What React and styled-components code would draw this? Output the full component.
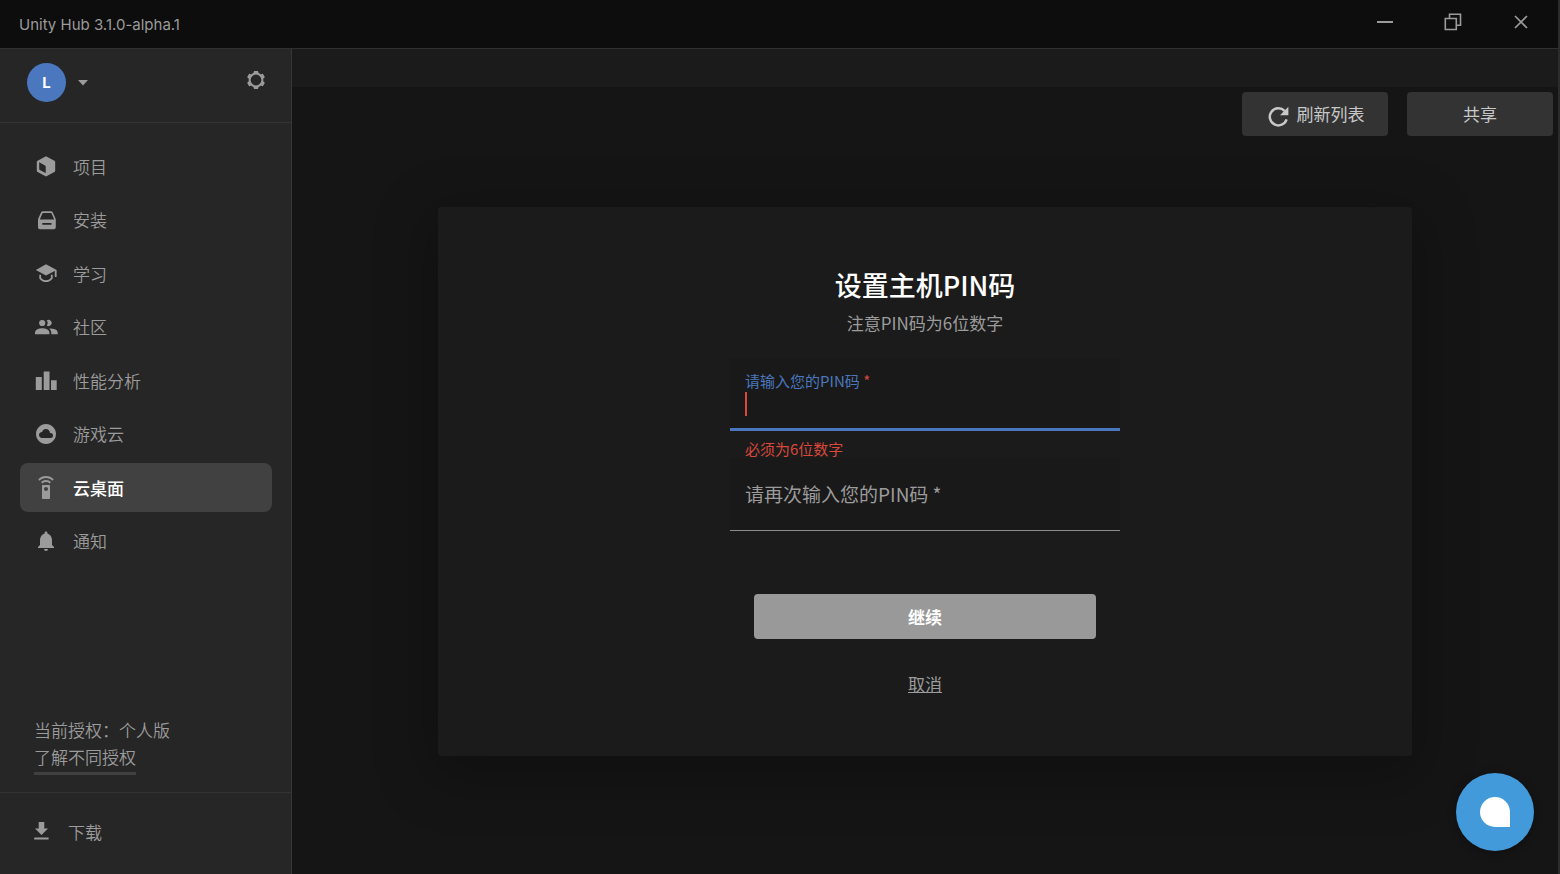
import React, { useState } from 'react';
import styled, { createGlobalStyle, css } from 'styled-components';
import { MdCloudCircle, MdNotifications, MdSettingsRemote } from 'react-icons/md';

const GlobalStyle = createGlobalStyle`
  * {
    box-sizing: border-box;
  }

  body {
    margin: 0;
    background: #151515;
    color: #9b9b9b;
    font-family: 'Noto Sans CJK SC', sans-serif;
    font-size: 17px;
    line-height: 24px;
  }

  button,
  input {
    padding: 0;
    border: 0;
    background: none;
    color: inherit;
    font: inherit;
  }

  button {
    cursor: pointer;
  }

  ul,
  h1,
  p {
    margin: 0;
    padding: 0;
    list-style: none;
  }
`;

const Window = styled.div`
  display: flex;
  flex-direction: column;
  min-height: 100vh;
  border-right: 2px solid #2c2c2e;
`;

const TitleBar = styled.header`
  display: flex;
  justify-content: space-between;
  height: 49px;
  padding: 0 3px 0 19px;
  border-bottom: 1px solid #303030;
  background: #0d0d0d;
  font-family: Inter, sans-serif;
  font-size: 15px;
  line-height: 49px;
`;

const WindowControls = styled.div`
  display: flex;
  height: 43px;
`;

const WindowButton = styled.button`
  display: grid;
  place-items: center;
  width: 68px;
`;

const Body = styled.div`
  display: flex;
  flex: 1;
`;

const Sidebar = styled.aside`
  display: flex;
  flex-direction: column;
  flex: 0 0 292px;
  border-right: 1px solid #363636;
  background: #262626;
  font-weight: 350;
`;

const Account = styled.div`
  display: flex;
  align-items: flex-start;
  justify-content: space-between;
  height: 74px;
  padding: 14px 25px 0 27px;
  border-bottom: 1px solid #333;
`;

const AccountButton = styled.button`
  display: flex;
  align-items: center;
  gap: 12px;
`;

const Avatar = styled.span`
  display: grid;
  place-items: center;
  width: 39px;
  height: 39px;
  border-radius: 50%;
  background: #4a77bd;
  color: #fff;
  font-family: Inter, sans-serif;
  font-size: 15px;
  font-weight: 700;
`;

const IconButton = styled.button`
  display: grid;
  place-items: center;
  width: 20px;
  height: 34px;
`;

const Menu = styled.ul`
  display: flex;
  flex-direction: column;
  justify-content: space-between;
  min-height: 424px;
  margin: 19px 19px auto 20px;
`;

const MenuItem = styled.a`
  display: flex;
  align-items: center;
  gap: 15px;
  height: 49px;
  padding: 0 14px;
  border-radius: 8px;
  color: #9b9b9b;
  text-decoration: none;

  ${({ $active }) =>
    $active &&
    css`
      background: #414141;

      span {
        color: #fff;
        font-weight: 500;
      }
    `}
`;

const License = styled.div`
  padding: 0 34px 17px;
  line-height: 27px;
`;

const LicenseLink = styled.a`
  display: inline-block;
  padding-bottom: 2px;
  border-bottom: 3px solid #404040;
  color: inherit;
  text-decoration: none;
`;

const Downloads = styled.button`
  display: flex;
  align-items: center;
  gap: 19px;
  height: 82px;
  padding: 0 34px 4px;
  border-top: 1px solid #333;
`;

const Main = styled.main`
  display: flex;
  flex-direction: column;
  flex: 1;
  min-width: 0;
`;

const MainHeader = styled.div`
  height: 38px;
  background: #1b1b1b;
`;

const Toolbar = styled.div`
  display: flex;
  justify-content: flex-end;
  gap: 19px;
  padding: 5px 5px 0;
`;

const ToolButton = styled.button`
  display: flex;
  align-items: center;
  justify-content: center;
  gap: 8px;
  width: 146px;
  height: 44px;
  border-radius: 4px;
  background: #333;
  color: #c8c8c8;

  svg {
    margin: 4px 0 0 2px;
  }
`;

const Card = styled.form`
  display: flex;
  flex-direction: column;
  align-items: center;
  width: 77%;
  margin: 71px auto 0;
  padding: 58px 0 60px;
  border-radius: 4px;
  background: #1b1b1b;
  box-shadow: 0 14px 56px 8px rgba(0, 0, 0, 0.25);
`;

const Heading = styled.h1`
  color: #fff;
  font-size: 27px;
  font-weight: 500;
  line-height: 40px;
`;

const Hint = styled.p`
  margin: 6px 0 23px;
`;

const Field = styled.div`
  width: 40%;
  height: 73px;
  background: #191919;
`;

const FocusedField = styled(Field)`
  padding: 12px 15px;
  border-bottom: 3px solid #4a77bd;
`;

const IdleField = styled(Field)`
  display: grid;
  border-bottom: 1px solid #8c8c8c;

  > * {
    grid-area: 1 / 1;
    padding: 0 15px;
  }
`;

const FloatingLabel = styled.label`
  display: block;
  color: #4a77bd;
  font-size: 15px;
  line-height: 22px;

  span {
    color: #d9483b;
  }
`;

const RestingLabel = styled.label`
  align-self: center;
  font-size: 19px;
  pointer-events: none;
`;

const InputRow = styled.div`
  display: flex;
  height: 24px;
`;

const Caret = styled.span`
  width: 2px;
  background: #d9483b;
`;

const Input = styled.input`
  flex: 1;
  min-width: 0;
  outline: none;
  caret-color: #d9483b;
`;

const ErrorText = styled.p`
  width: 40%;
  padding: 9px 15px 0;
  color: #d9483b;
  font-size: 15px;
  line-height: 18px;
`;

const SubmitButton = styled.button`
  width: 35%;
  height: 45px;
  margin: 63px 0 33px;
  border-radius: 4px;
  background: #999;
  color: #fff;
  font-weight: 700;
`;

const CancelButton = styled.button`
  text-decoration: underline;
`;

const ChatButton = styled.button`
  position: fixed;
  right: 26px;
  bottom: 23px;
  display: grid;
  place-items: center;
  width: 78px;
  height: 78px;
  border-radius: 50%;
  background: #429adb;
  box-shadow: 0 2px 10px rgba(0, 0, 0, 0.3);
`;

const ChatMark = styled.span`
  width: 30px;
  height: 30px;
  border-radius: 50% 50% 0 50%;
  background: #fff;
`;

const GearIcon = () => (
  <svg width="20" height="20" viewBox="0 0 20 20" fill="currentColor">
    <circle cx="10" cy="10" r="6.4" fill="none" stroke="currentColor" strokeWidth="2" />
    {[0, 60, 120].map((angle) => (
      <path key={angle} transform={`rotate(${angle} 10 10)`} d="M8 .9h4l.6 2.6H7.4zM8 19.1h4l.6-2.6H7.4z" />
    ))}
  </svg>
);

const CubeIcon = () => (
  <svg width="24" height="24" viewBox="0 0 24 24" fill="currentColor" fillRule="evenodd">
    <path d="M12 1.2l8.4 4.5q.8.5.8 1.4v8.6q0 .9-.8 1.4L12 21.4l-8.4-4.3q-.8-.5-.8-1.4V7.1q0-.9.8-1.4zM5.2 7.3v6.8q0 .7.6 1l5.9 3V11.8q0-.8-.7-1.2z" />
  </svg>
);

const InstallIcon = () => (
  <svg width="24" height="24" viewBox="0 0 24 24" fill="currentColor" fillRule="evenodd">
    <path d="M9 3.2h8q1.2 0 1.7 1.1l2.8 6.3q.3.7.3 1.4v7.2q0 2-2 2H6q-2 0-2-2V12q0-.7.3-1.4l2.8-6.3Q7.7 3.2 9 3.2zm.1 1.7q-.5 0-.7.5l-2.6 6h14.4l-2.6-6q-.2-.5-.7-.5zM8.3 15v1.8h9.2V15z" />
  </svg>
);

const LearnIcon = () => (
  <svg width="24" height="24" viewBox="0 0 24 24" fill="none" stroke="currentColor" strokeWidth="1.8">
    <path d="M12 2.3L22.6 8 12 13.4 1.8 8z" fill="currentColor" stroke="none" />
    <path d="M21.7 8v7M6.2 12.8v3.4q2.4 3 5.8 3t5.8-3v-3.4" />
  </svg>
);

const CommunityIcon = () => (
  <svg width="24" height="24" viewBox="0 0 24 24" fill="currentColor">
    <circle cx="8.2" cy="8" r="3.1" />
    <path d="M12.7 5.5a3.1 3.1 0 1 1 0 5q1-1.1 1-2.5t-1-2.5zM1 19.3v-1.8q0-1.8 2-2.9 2.2-1.3 5.2-1.3t5.2 1.3q2 1.1 2 2.9v1.8zM15.3 13.4q3.7-.1 6.3 1.2 2.1 1.1 2.1 2.9v1.8h-6.4v-1.8q0-2.4-2-4.1z" />
  </svg>
);

const AnalyticsIcon = () => (
  <svg width="24" height="24" viewBox="0 0 24 24" fill="currentColor">
    <path d="M1.8 8h6v13h-6zM9.7 2.4h5.8V21H9.7zM17 11.2h5.7V21H17z" />
  </svg>
);

const DownloadIcon = () => (
  <svg width="15" height="20" viewBox="0 0 15 20" fill="currentColor">
    <path d="M4.7 0h5.6v6.4H14L7.5 13 1 6.4h3.7zM.2 15.4h14.4v2H.2z" />
  </svg>
);

const RefreshIcon = () => (
  <svg width="21" height="21" viewBox="0 0 21 21" fill="none" stroke="currentColor" strokeWidth="2.5">
    <path d="M18.6 13.4a8.6 8.6 0 1 1-2-8.6" />
    <path d="M20.4.8v8.4H12z" fill="currentColor" stroke="none" />
  </svg>
);

const menuItems = [
  { label: '项目', icon: <CubeIcon /> },
  { label: '安装', icon: <InstallIcon /> },
  { label: '学习', icon: <LearnIcon /> },
  { label: '社区', icon: <CommunityIcon /> },
  { label: '性能分析', icon: <AnalyticsIcon /> },
  { label: '游戏云', icon: <MdCloudCircle size={24} /> },
  { label: '云桌面', icon: <MdSettingsRemote size={24} />, active: true },
  { label: '通知', icon: <MdNotifications size={24} /> },
];

const SideNav = () => (
  <Sidebar>
    <Account>
      <AccountButton type="button" aria-label="账户">
        <Avatar>L</Avatar>
        <svg width="10" height="6" viewBox="0 0 10 6" fill="currentColor">
          <path d="M0 0h10L5 5.4z" />
        </svg>
      </AccountButton>
      <IconButton type="button" aria-label="设置">
        <GearIcon />
      </IconButton>
    </Account>
    <Menu>
      {menuItems.map(({ label, icon, active }) => (
        <li key={label}>
          <MenuItem href="#" $active={active}>
            {icon}
            <span>{label}</span>
          </MenuItem>
        </li>
      ))}
    </Menu>
    <License>
      <div>当前授权：个人版</div>
      <LicenseLink href="#">了解不同授权</LicenseLink>
    </License>
    <Downloads type="button">
      <DownloadIcon />
      下载
    </Downloads>
  </Sidebar>
);

const PinForm = () => {
  const [pin, setPin] = useState('');
  const [confirm, setConfirm] = useState('');

  return (
    <Card onSubmit={(e) => e.preventDefault()}>
      <Heading>设置主机PIN码</Heading>
      <Hint>注意PIN码为6位数字</Hint>
      <FocusedField>
        <FloatingLabel htmlFor="pin">
          请输入您的PIN码 <span>*</span>
        </FloatingLabel>
        <InputRow>
          {!pin && <Caret />}
          <Input id="pin" maxLength={6} value={pin} onChange={(e) => setPin(e.target.value)} />
        </InputRow>
      </FocusedField>
      <ErrorText>必须为6位数字</ErrorText>
      <IdleField>
        <Input id="pin-confirm" maxLength={6} value={confirm} onChange={(e) => setConfirm(e.target.value)} />
        {!confirm && <RestingLabel htmlFor="pin-confirm">请再次输入您的PIN码 *</RestingLabel>}
      </IdleField>
      <SubmitButton type="submit">继续</SubmitButton>
      <CancelButton type="button">取消</CancelButton>
    </Card>
  );
};

const App = () => (
  <>
    <GlobalStyle />
    <Window>
      <TitleBar>
        <span>Unity Hub 3.1.0-alpha.1</span>
        <WindowControls>
          <WindowButton type="button" aria-label="最小化">
            <svg width="18" height="18" viewBox="0 0 18 18">
              <path d="M1 9h16" stroke="currentColor" strokeWidth="2" />
            </svg>
          </WindowButton>
          <WindowButton type="button" aria-label="还原">
            <svg width="18" height="18" viewBox="0 0 18 18" fill="none" stroke="currentColor" strokeWidth="1.6">
              <path d="M1.3 5.5h11v11h-11zM5.5 5.5V1.3h11v11h-4.2" />
            </svg>
          </WindowButton>
          <WindowButton type="button" aria-label="关闭">
            <svg width="14" height="14" viewBox="0 0 14 14" stroke="currentColor" strokeWidth="1.7">
              <path d="M1 1l12 12M13 1L1 13" />
            </svg>
          </WindowButton>
        </WindowControls>
      </TitleBar>
      <Body>
        <SideNav />
        <Main>
          <MainHeader />
          <Toolbar>
            <ToolButton type="button">
              <RefreshIcon />
              刷新列表
            </ToolButton>
            <ToolButton type="button">共享</ToolButton>
          </Toolbar>
          <PinForm />
        </Main>
      </Body>
      <ChatButton type="button" aria-label="在线客服">
        <ChatMark />
      </ChatButton>
    </Window>
  </>
);

export default App;
